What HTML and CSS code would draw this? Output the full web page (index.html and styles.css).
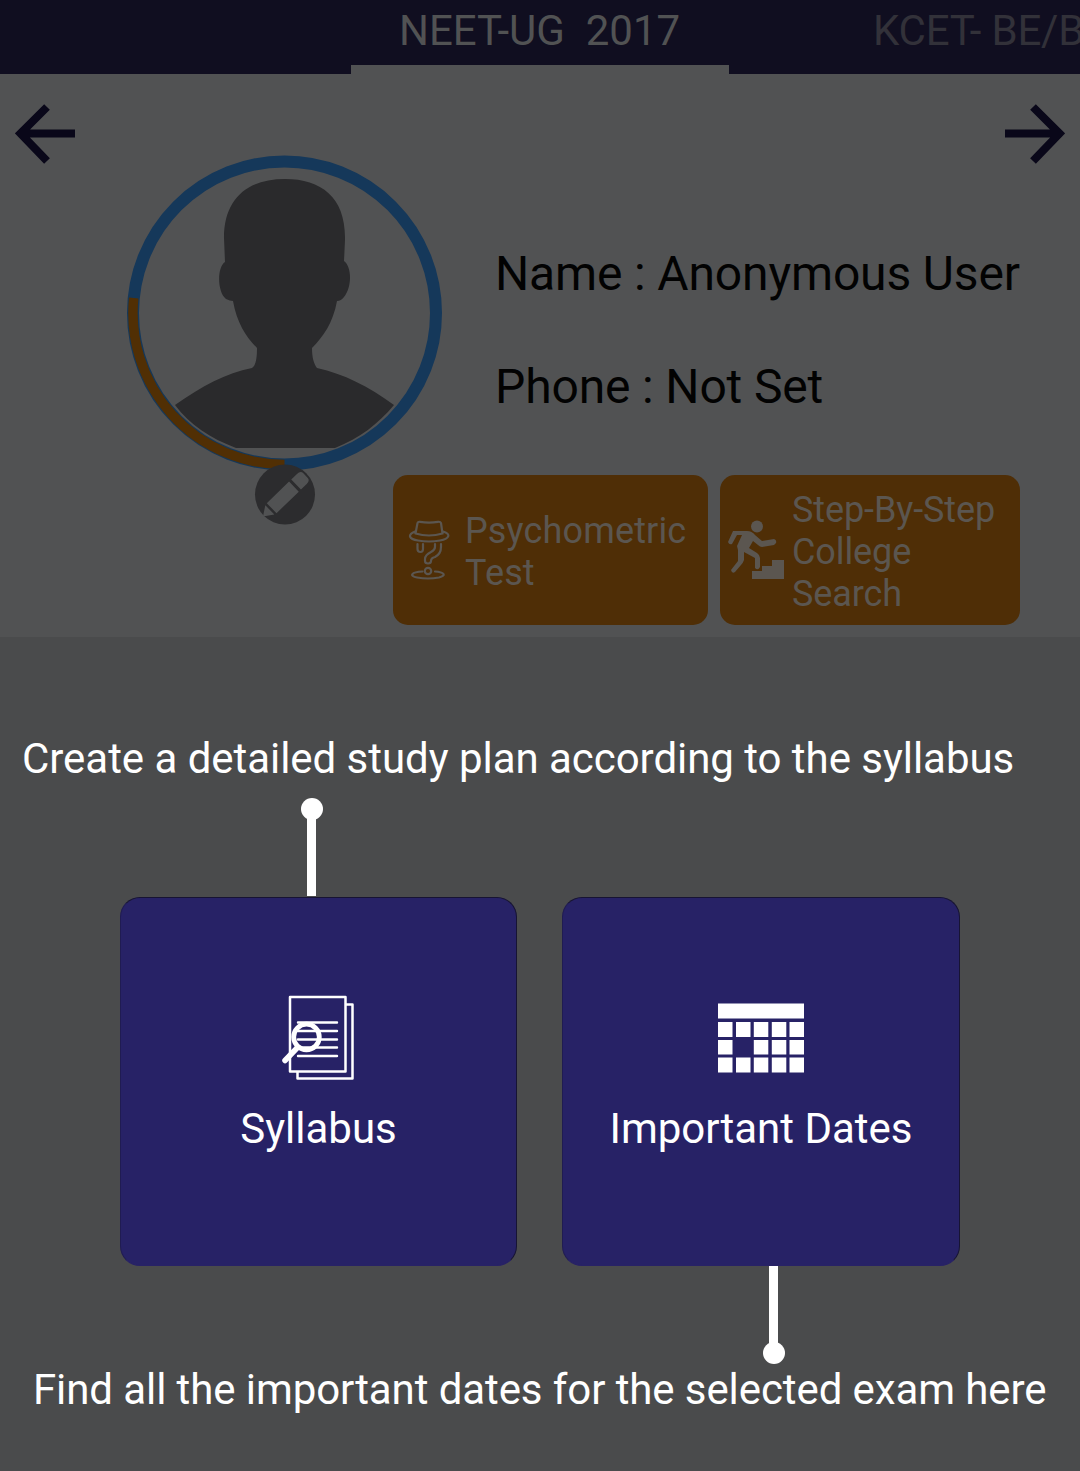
FILE: index.html
```html
<!DOCTYPE html>
<html lang="en">
<head>
<meta charset="utf-8">
<title>Exam dashboard</title>
<link rel="stylesheet" href="styles.css">
</head>
<body>
<header class="tabs">
  <div class="tab tab-active"><span class="tab-label">NEET-UG&nbsp; 2017</span></div>
  <div class="tab tab-next"><span class="tab-label">KCET- BE/B</span></div>
</header>
<section class="profile">
  <svg class="arrow arrow-left" viewBox="0 0 60 60"><path d="M60 29.500H5M32 3L5.500 29.500L32 57" /></svg>
  <svg class="arrow arrow-right" viewBox="0 0 60 60"><path d="M0 29.500H55M28 3L54.500 29.500L28 57" /></svg>
  <svg class="avatar" viewBox="126 154 318 372">
    <path class="shape" d="M285 179C248 179 224 198 224 238L225 262C217 267 217 292 226 299Q230 301 233 301C237 323 246 337 257 348C257 358 256 365 252 368C226 373 202 386 175 405C190 425 210 438 236 448H335C360 438 378 424 394 405C368 386 344 374 317 368C314 364 312 358 312 348C323 337 333 323 337 301Q341 301 344 297C352 287 352 267 344 261L345 240C346 198 322 179 285 179Z"/>
    <circle class="ring" cx="284.500" cy="313" r="151.500"/>
    <path class="ring-progress" d="M284.500 464.500A151.500 151.500 0 0 1 133.700 298"/>
    <circle class="pencil-bg" cx="285" cy="494.500" r="30"/>
    <g class="pencil" transform="translate(263 516.500) rotate(-44)">
      <path d="M0 0L9.500 -6.500V6.500ZM12 -7H43V7H12ZM46 -7H54Q59 -7 59 -3V3Q59 7 54 7H46Z"/>
    </g>
  </svg>
  <div class="info">
    <p class="info-line info-name">Name : Anonymous User</p>
    <p class="info-line info-phone">Phone : Not Set</p>
  </div>
  <div class="actions">
    <div class="action action-psy">
      <svg class="icon-psy" viewBox="408 519 44 62">
        <path d="M415.500 533.500L417.500 523Q418 521.500 420 521.800Q429 523.300 438 521.800Q440.500 521.500 441 523L442.500 533.500Q429 537.500 415.500 533.500M415 531.500C407 535 409 539 418 540.500Q429 542.500 440 540.500C450 538.500 451 534 443 531.500M417.500 544V549Q417.500 552 420.500 552Q423 552 423 549V544M435 544V547Q435 550 431 552Q425 555 425 559V561Q425 563.500 428 563.500Q431 563.500 431 561Q431 558 435 557Q441 554 441 547V544M422.500 571.500C411 572 409 576 417 577.500Q428 579.500 439 577.500C447 575.500 444 572 435 571.500"/>
        <circle cx="428" cy="571" r="3.200"/>
      </svg>
      <span class="action-text">Psychometric<br>Test</span>
    </div>
    <div class="action action-step">
      <svg class="icon-step" viewBox="727 519 58 62">
        <circle cx="757" cy="526.500" r="6"/>
        <path d="M733 531H747Q752 531 755 535L762 541L774 539Q777 540 776 543L774 545L762 547Q760 547 758 545L753 541L749 548L757 553Q760 555 760 558V567Q758 571 755 568V558L744 552V560Q743 563 741 565L735 572Q732 574 731 570L738 561V550L737 546L742 535H737L732 544Q729 545 728 542Z"/>
        <path d="M752 579V571H762V566H772V560H784V579Z"/>
      </svg>
      <span class="action-text">Step-By-Step<br>College<br>Search</span>
    </div>
  </div>
</section>
<main class="guide">
  <p class="hint hint-top">Create a detailed study plan according to the syllabus</p>
  <svg class="pin pin-top" viewBox="0 0 22 98"><circle cx="11" cy="11" r="11"/><path d="M6 11H15V98H6Z"/></svg>
  <div class="cards">
    <div class="card">
      <svg class="card-icon" viewBox="281 994 76 88">
        <path class="doc" d="M290 997H345.500V1071.500H290ZM345.500 1004.500H352.500V1078.500H297.500V1072"/>
        <path class="doc-lines" d="M298 1022.500H337M298 1031H337M298 1039.500H337M298 1047.500H337M298 1056H337"/>
        <circle class="lens" cx="306.500" cy="1037" r="12.800"/>
        <path class="handle" d="M297 1048L285 1060.500"/>
      </svg>
      <span class="card-label">Syllabus</span>
    </div>
    <div class="card card-wide">
      <svg class="card-icon icon-dates" viewBox="716 994 90 88">
        <path class="cells" d="M718 1003.500h86v15h-86ZM718 1022h14.500v15h-14.500ZM736 1022h14.500v15h-14.500ZM753.800 1022h14.500v15h-14.500ZM771.800 1022h14.500v15h-14.500ZM789.500 1022h14.500v15h-14.500ZM718 1040h14.500v14.500h-14.500ZM753.800 1040h14.500v14.500h-14.500ZM771.800 1040h14.500v14.500h-14.500ZM789.500 1040h14.500v14.500h-14.500ZM718 1057.500h14.500v15h-14.500ZM736 1057.500h14.500v15h-14.500ZM753.800 1057.500h14.500v15h-14.500ZM771.800 1057.500h14.500v15h-14.500ZM789.500 1057.500h14.500v15h-14.500Z"/>
      </svg>
      <span class="card-label">Important Dates</span>
    </div>
  </div>
  <svg class="pin pin-bottom" viewBox="0 0 22 98"><circle cx="11" cy="87" r="11"/><path d="M6 0H15V87H6Z"/></svg>
  <p class="hint hint-bottom">Find all the important dates for the selected exam here</p>
</main>
</body>
</html>
```
FILE: styles.css
```css
* { box-sizing: border-box; }
body {
  margin: 0;
  width: 1080px;
  height: 1471px;
  overflow: hidden;
  background: #4a4b4c;
  font-family: Roboto, "Liberation Sans", sans-serif;
}
p { margin: 0; }
svg { display: block; flex: none; }

.tabs {
  display: flex;
  height: 74px;
  padding-left: 351px;
  background: #100e20;
  overflow: hidden;
}
.tab {
  flex: none;
  height: 74px;
  font-size: 42px;
  line-height: 62px;
  white-space: nowrap;
}
.tab-active {
  width: 378px;
  padding-left: 48px;
  border-bottom: 9px solid #515253;
  color: #515253;
}
.tab-next { padding-left: 144px; color: #323139; letter-spacing: -0.2px; }

.profile {
  display: grid;
  grid-template-columns: 126px 370px 509px 75px;
  grid-template-rows: 158px 243px 150px;
  height: 563px;
  background: #515253;
}
.arrow {
  width: 60px;
  height: 60px;
  margin-top: 30px;
  fill: none;
  stroke: #090719;
  stroke-width: 8px;
}
.arrow-left { grid-area: 1 / 1; margin-left: 15px; }
.arrow-right { grid-area: 1 / 4; }
.avatar {
  grid-area: 1 / 2 / 4 / 3;
  width: 318px;
  height: 372px;
  margin-top: 80px;
}
.shape { fill: #2a2a2c; }
.ring { fill: none; stroke: #15385a; stroke-width: 12px; }
.ring-progress { fill: none; stroke: #512f04; stroke-width: 9.500px; }
.pencil-bg { fill: #2c2c2e; }
.pencil { fill: #515253; }
.info { grid-area: 2 / 3 / 3 / 5; margin-left: -1px; }
.info-line {
  height: 113px;
  font-size: 48px;
  line-height: 84px;
  letter-spacing: -0.15px;
  color: #020202;
  white-space: nowrap;
}
.actions {
  grid-area: 3 / 1 / 4 / 5;
  display: flex;
  gap: 12px;
  padding-left: 393px;
}
.action {
  display: flex;
  align-items: center;
  height: 150px;
  border-radius: 15px;
  background: #4f2e06;
  color: #5b5650;
  font-size: 36px;
  line-height: 42px;
  white-space: nowrap;
}
.action-text { padding-top: 4px; }
.action-psy { width: 315px; padding-left: 15px; gap: 13px; letter-spacing: 0.15px; }
.action-step { width: 300px; padding-left: 7px; gap: 7px; letter-spacing: -0.1px; }
.icon-psy {
  width: 44px;
  height: 62px;
  fill: none;
  stroke: #5b5650;
  stroke-width: 2.200px;
  stroke-linecap: round;
}
.icon-step { width: 58px; height: 62px; fill: #5b5650; }

.guide { color: #fff; }
.hint { font-size: 42px; line-height: 50px; white-space: nowrap; }
.hint-top { padding: 97px 0 0 22px; letter-spacing: -0.04px; }
.hint-bottom { margin: 1px 0 0 33px; letter-spacing: -0.09px; }
.pin { width: 22px; height: 98px; fill: #fff; }
.pin-top { margin: 14px 0 0 301px; }
.pin-bottom { margin-left: 763px; }
.cards { display: flex; gap: 45px; padding: 1px 0 0 120px; }
.card {
  display: flex;
  flex-direction: column;
  align-items: center;
  width: 397px;
  height: 369px;
  padding-top: 96px;
  border: 1px solid #171433;
  border-left-color: #201c52;
  border-bottom-color: #282266;
  border-radius: 20px;
  background: #272266;
}
.card-wide { width: 398px; }
.card-icon { width: 76px; height: 88px; }
.icon-dates { width: 90px; }
.card-label { margin-top: 22px; font-size: 42px; line-height: 50px; }
.doc { fill: none; stroke: #fff; stroke-width: 2.500px; stroke-linejoin: round; }
.doc-lines { stroke: #fff; stroke-width: 2.400px; stroke-linecap: round; }
.lens { fill: none; stroke: #fff; stroke-width: 4.800px; }
.handle { stroke: #fff; stroke-width: 5.500px; stroke-linecap: round; }
.cells { fill: #fff; }
```
